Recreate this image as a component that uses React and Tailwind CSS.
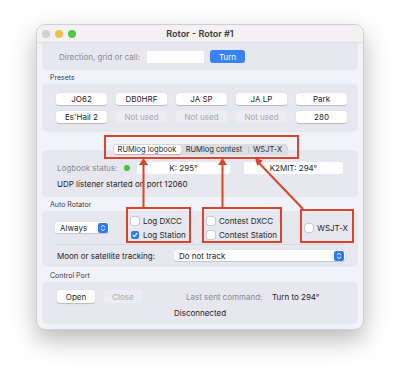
import React from "react";

const font = { fontFamily: "Inter, 'Liberation Sans', sans-serif" };

function Btn({ children, muted, className = "" }) {
  return (
    <div
      className={`flex items-center justify-center h-[12px] rounded-[3px] text-[8px] ${
        muted ? "bg-[#ececf2] text-[#a8a8b0]" : "bg-white text-[#262626] shadow-[0_0.5px_1px_rgba(0,0,0,0.2)]"
      } ${className}`}
    >
      {children}
    </div>
  );
}

function Check({ checked, label }) {
  return (
    <div className="flex items-center gap-[4px] h-[9px] whitespace-nowrap">
      {checked ? (
        <div className="shrink-0 w-[8px] h-[8px] rounded-[2px] bg-[#2f7bf5] flex items-center justify-center">
          <svg width="6" height="6" viewBox="0 0 6 6">
            <path d="M1 3.2 L2.4 4.6 L5 1.4" stroke="white" strokeWidth="1.1" fill="none" strokeLinecap="round" strokeLinejoin="round" />
          </svg>
        </div>
      ) : (
        <div className="shrink-0 w-[8px] h-[8px] rounded-[2px] bg-white shadow-[0_0_0_0.5px_rgba(0,0,0,0.25)]" />
      )}
      <span className="text-[8px] text-[#262626]">{label}</span>
    </div>
  );
}

function Stepper() {
  return (
    <div className="shrink-0 w-[10px] h-[10px] rounded-[2px] bg-[#2f7bf5] flex items-center justify-center">
      <svg width="6" height="8" viewBox="0 0 6 8">
        <path d="M1.2 3 L3 1.3 L4.8 3 M1.2 5 L3 6.7 L4.8 5" stroke="white" strokeWidth="0.9" fill="none" strokeLinecap="round" strokeLinejoin="round" />
      </svg>
    </div>
  );
}

function SectionLabel({ children, h }) {
  return (
    <div className={`flex items-end pl-[8px] pb-[1px] text-[7px] text-[#3a3a3a] ${h}`}>{children}</div>
  );
}

export default function App() {
  const red = "#d9442c";
  return (
    <div className="relative w-[400px] h-[376px] bg-white overflow-hidden" style={font}>
      <div className="ml-[36px] mt-[24px] w-[328px] rounded-[9px] bg-[#f2f2fa] border border-[#cfcfd4] shadow-[0_10px_24px_rgba(0,0,0,0.28)] overflow-hidden">
        {/* Title bar */}
        <div className="relative h-[18px] bg-[#f4f1f4] flex items-center pl-[5px] gap-[5px] border-b border-[#e2dfe3]">
          <div className="w-[8px] h-[8px] rounded-full bg-[#d2d0d2]" />
          <div className="w-[8px] h-[8px] rounded-full bg-[#f5be3f]" />
          <div className="w-[8px] h-[8px] rounded-full bg-[#58c544]" />
          <div className="absolute inset-0 flex items-center justify-center text-[9px] font-semibold text-[#3a3a3a]">
            Rotor - Rotor #1
          </div>
        </div>

        <div className="px-[5px] pb-[5px]">
          {/* Direction box */}
          <div className="h-[27px] rounded-b-[5px] bg-[#e7e7ef] flex items-center">
            <span className="w-[98px] text-right text-[8px] text-[#8a8a90]">Direction, grid or call:</span>
            <div className="ml-[7px] w-[57px] h-[12px] bg-white" />
            <div className="ml-[6px] w-[35px] h-[13px] rounded-[3px] bg-[#3a82f7] text-white text-[8px] flex items-center justify-center">
              Turn
            </div>
          </div>

          <SectionLabel h="h-[14px]">Presets</SectionLabel>
          <div className="h-[48px] rounded-[5px] bg-[#e7e7ef] pl-[14px] pt-[9px] flex flex-col gap-[6px]">
            <div className="flex gap-[9px]">
              {["JO62", "DB0HRF", "JA SP", "JA LP", "Park"].map((t) => (
                <Btn key={t} className="w-[51px]">{t}</Btn>
              ))}
            </div>
            <div className="flex gap-[9px]">
              <Btn className="w-[51px]">Es'Hail 2</Btn>
              <Btn muted className="w-[51px]">Not used</Btn>
              <Btn muted className="w-[51px]">Not used</Btn>
              <Btn muted className="w-[51px]">Not used</Btn>
              <Btn className="w-[51px]">280</Btn>
            </div>
          </div>

          {/* Tabs */}
          <div className="relative z-10 mt-[12px] h-[11px] flex justify-center">
            <div className="flex items-center h-[11px] rounded-[3px] bg-[#dcdce4] p-[1px] text-[7.5px] text-[#2a2a2a] whitespace-nowrap">
              <div className="w-[67px] h-[9px] rounded-[2px] bg-white shadow-[0_0.5px_1px_rgba(0,0,0,0.2)] flex items-center justify-center">
                RUMlog logbook
              </div>
              <div className="w-[67px] flex items-center justify-center">RUMlog contest</div>
              <div className="w-[1px] h-[6px] bg-[#c2c2ca]" />
              <div className="w-[38px] flex items-center justify-center">WSJT-X</div>
            </div>
          </div>
          <div className="-mt-[5px] h-[47px] rounded-[5px] bg-[#e7e7ef] pt-[12px] pl-[15px]">
            <div className="flex items-center h-[12px]">
              <span className="w-[62px] text-[8px] text-[#8a8a90]">Logbook status:</span>
              <div className="ml-[5px] w-[6px] h-[6px] rounded-full bg-[#4cc23e]" />
              <div className="ml-[7px] w-[93px] h-[12px] bg-white rounded-[2px] flex items-center justify-center text-[8px] text-[#262626]">
                K: 295°
              </div>
              <div className="ml-[14px] w-[99px] h-[12px] bg-white rounded-[2px] flex items-center justify-center text-[8px] text-[#262626]">
                K2MIT: 294°
              </div>
            </div>
            <div className="mt-[4px] text-[8px] text-[#262626]">UDP listener started on port 12060</div>
          </div>

          <SectionLabel h="h-[14px]">Auto Rotator</SectionLabel>
          <div className="h-[56px] rounded-[5px] bg-[#e7e7ef] pl-[13px] pr-[13px] pt-[5px]">
            <div className="flex items-center h-[23px]">
              <div className="shrink-0 w-[54px] h-[11px] rounded-[3px] bg-white flex items-center justify-between pl-[5px] pr-[1px] shadow-[0_0.5px_1px_rgba(0,0,0,0.15)]">
                <span className="text-[8px] text-[#262626]">Always</span>
                <Stepper />
              </div>
              <div className="shrink-0 ml-[22px] w-[76px] flex flex-col gap-[5px]">
                <Check label="Log DXCC" />
                <Check checked label="Log Station" />
              </div>
              <div className="shrink-0 w-[98px] flex flex-col gap-[5px]">
                <Check label="Contest DXCC" />
                <Check label="Contest Station" />
              </div>
              <div className="shrink-0">
                <Check label="WSJT-X" />
              </div>
            </div>
            <div className="mt-[5px] ml-[2px] h-[1px] bg-[#d7d7df]" />
            <div className="mt-[5px] flex items-center h-[11px]">
              <span className="ml-[2px] w-[117px] text-[8px] text-[#262626]">Moon or satellite tracking:</span>
              <div className="w-[171px] h-[11px] rounded-[3px] bg-white flex items-center justify-between pl-[5px] pr-[1px] shadow-[0_0.5px_1px_rgba(0,0,0,0.15)]">
                <span className="text-[8px] text-[#262626]">Do not track</span>
                <Stepper />
              </div>
            </div>
          </div>

          <SectionLabel h="h-[15px]">Control Port</SectionLabel>
          <div className="h-[42px] rounded-[5px] bg-[#e7e7ef] pt-[8px] pl-[15px]">
            <div className="flex items-center h-[13px]">
              <Btn className="w-[38px] !h-[13px]">Open</Btn>
              <Btn muted className="ml-[9px] w-[38px] !h-[13px]">Close</Btn>
              <span className="ml-[44px] w-[86px] text-[8px] text-[#8a8a90]">Last sent command:</span>
              <span className="text-[8px] text-[#262626]">Turn to 294°</span>
            </div>
            <div className="mt-[4px] -ml-[15px] text-center text-[8px] text-[#262626]">Disconnected</div>
          </div>
        </div>
      </div>

      {/* Annotation overlay */}
      <svg className="absolute inset-0 pointer-events-none" width="400" height="376" viewBox="0 0 400 376">
        <g fill="none" stroke={red} strokeWidth="2">
          <rect x="105" y="136" width="193" height="22" />
          <rect x="127" y="208" width="63" height="34" />
          <rect x="203" y="208" width="78" height="34" />
          <rect x="301" y="210" width="52" height="32" />
          <line x1="143.5" y1="207" x2="143.5" y2="164" />
          <line x1="222.5" y1="207" x2="222.5" y2="164" />
          <line x1="303" y1="209" x2="259" y2="163" />
        </g>
        <g fill={red}>
          <polygon points="143.5,158 139,165 148,165" />
          <polygon points="222.5,158 218,165 227,165" />
          <polygon points="255,158 262.7,160.5 257.3,166" />
        </g>
      </svg>
    </div>
  );
}
